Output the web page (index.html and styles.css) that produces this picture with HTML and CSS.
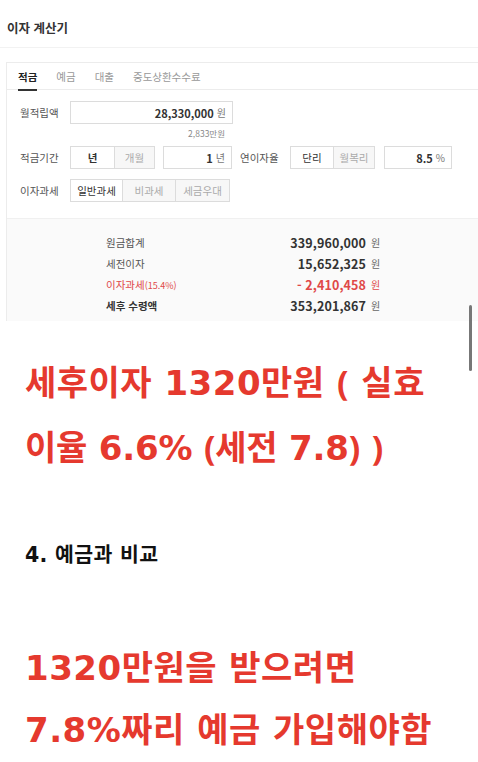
FILE: index.html
```html
<!DOCTYPE html>
<html lang="ko">
<head>
<meta charset="utf-8">
<link rel="stylesheet" href="styles.css">
</head>
<body>
<div class="page">
  <div class="header">이자 계산기</div>
  <div class="card">
    <div class="tabs">
      <span class="tab active">적금</span>
      <span class="tab">예금</span>
      <span class="tab">대출</span>
      <span class="tab">중도상환수수료</span>
    </div>
    <div class="form">
      <div class="row">
        <span class="label">월적립액</span>
        <div class="input wide"><b>28,330,000</b><span class="unit">원</span></div>
      </div>
      <div class="note">2,833만원</div>
      <div class="row">
        <span class="label">적금기간</span>
        <div class="seg">
          <span class="btn on w45"><b>년</b></span>
          <span class="btn off w40">개월</span>
        </div>
        <div class="input small"><b>1</b><span class="unit">년</span></div>
        <span class="label label2">연이자율</span>
        <div class="seg">
          <span class="btn on w44">단리</span>
          <span class="btn off w41">월복리</span>
        </div>
        <div class="input small rate"><b>8.5</b><span class="unit">%</span></div>
      </div>
      <div class="row">
        <span class="label">이자과세</span>
        <div class="seg">
          <span class="btn on w53">일반과세</span>
          <span class="btn off w53">비과세</span>
          <span class="btn off w54">세금우대</span>
        </div>
      </div>
    </div>
    <div class="results">
      <div class="res-row"><span class="rl">원금합계</span><span class="rv">339,960,000</span><span class="ru">원</span></div>
      <div class="res-row"><span class="rl">세전이자</span><span class="rv">15,652,325</span><span class="ru">원</span></div>
      <div class="res-row red"><span class="rl">이자과세<small>(15.4%)</small></span><span class="rv">- 2,410,458</span><span class="ru">원</span></div>
      <div class="res-row"><span class="rl strong">세후 수령액</span><span class="rv">353,201,867</span><span class="ru">원</span></div>
    </div>
  </div>
  <div class="content">
    <p class="big first">세후이자 1320만원 <span class="pn">(</span> 실효<br><span class="tight">이율 6.6% <span class="pn">(</span>세전 7.8<span class="pn">)</span> <span class="pn">)</span></span></p>
    <p class="sub">4. 예금과 비교</p>
    <p class="big second">1320만원을 받으려면<br>7.8%짜리 예금 가입해야함</p>
  </div>
  <div class="scrollbar"></div>
</div>
</body>
</html>
```
FILE: styles.css
```css
* { box-sizing: border-box; }
html, body { margin: 0; padding: 0; background: #fff; }
body {
  font-family: "Noto Sans CJK KR", "Noto Sans", sans-serif;
  color: #333;
  width: 478px;
  height: 762px;
  overflow: hidden;
}
.page { position: relative; width: 478px; height: 762px; }
.header {
  height: 48px;
  padding: 19px 0 0 7px;
  font-size: 12.5px;
  line-height: 18px;
  font-weight: 700;
  color: #333;
  border-bottom: 1px solid #f2f2f2;
}
.card {
  margin: 14px 0 0 6px;
  border-top: 1px solid #ececec;
  border-left: 1px solid #ececec;
}
.tabs {
  display: flex;
  height: 27px;
  border-bottom: 1px solid #ececec;
  padding-left: 11px;
}
.tab {
  font-size: 10.5px;
  line-height: 27px;
  color: #999;
  margin-right: 19px;
  position: relative;
}
.tab.active { color: #222; font-weight: 700; }
.tab.active::after {
  content: "";
  position: absolute;
  left: 0; right: 0; bottom: -2px;
  height: 2px;
  background: #333;
}
.form { padding: 11px 0 16px 13px; }
.row { display: flex; align-items: center; height: 23px; }
.row + .row { margin-top: 10px; }
.label { font-size: 10.5px; color: #555; width: 50px; flex: none; }
.label2 { width: 50px; margin-left: 8px; }
.input {
  height: 23px;
  border: 1px solid #dcdcdc;
  display: flex;
  align-items: center;
  justify-content: flex-end;
  padding-right: 6px;
  font-size: 11px;
  color: #333;
  background: #fff;
}
.input b { font-weight: 700; }
.input .unit { font-size: 10px; color: #777; margin-left: 3px; }
.input.wide { width: 163px; }
.input.small { width: 69px; margin-left: 8px; }
.input.rate { margin-left: 9px; width: 68px; }
.note {
  width: 212px;
  text-align: right;
  font-size: 8.5px;
  color: #888;
  line-height: 12px;
  margin: 3px 0 0 0;
  padding-right: 7px;
}
.note + .row { margin-top: 7px; }
.seg { display: flex; }
.btn {
  height: 23px;
  border: 1px solid #dcdcdc;
  font-size: 10.5px;
  display: flex;
  align-items: center;
  justify-content: center;
}
.btn + .btn { border-left: none; }
.btn.on { background: #fff; color: #333; }
.btn.off { background: #f7f7f7; color: #aaa; }
.w40 { width: 40px; } .w41 { width: 41px; } .w44 { width: 44px; } .w45 { width: 45px; }
.w53 { width: 53px; } .w54 { width: 54px; }
.results {
  background: #fafafa;
  border-top: 1px solid #f0f0f0;
  height: 103px;
  padding: 13px 0 0 99px;
}
.res-row {
  display: flex;
  align-items: center;
  width: 273px;
  height: 21px;
}
.rl { font-size: 10.5px; color: #555; flex: 1; }
.rl small { font-size: 9px; }
.rl.strong { font-weight: 700; color: #333; }
.rv { font-size: 12.5px; font-weight: 700; color: #333; letter-spacing: 0.1px; }
.ru { font-size: 10px; color: #666; margin-left: 5px; width: 8px; }
.res-row.red .rl, .res-row.red .rv, .res-row.red .ru { color: #e04848; }
.content { padding-left: 25px; }
.big {
  margin: 0;
  font-family: "DejaVu Sans", "Noto Sans CJK KR", sans-serif;
  font-size: 34px;
  font-weight: 700;
  color: #e5392e;
  line-height: 64px;
  letter-spacing: 0.5px;
  white-space: nowrap;
}
.pn { font-family: "Noto Sans", sans-serif; }
.tight { letter-spacing: -0.2px; }
.big.first { margin-top: 29px; }
.sub {
  margin: 61px 0 0 0;
  font-family: "DejaVu Sans", "Noto Sans CJK KR", sans-serif;
  font-size: 20.5px;
  line-height: 28px;
  font-weight: 700;
  color: #111;
  letter-spacing: 0.3px;
}
.big.second { margin-top: 68px; line-height: 62px; }
.scrollbar {
  position: absolute;
  left: 469px;
  top: 305px;
  width: 3px;
  height: 66px;
  border-radius: 2px;
  background: #777;
}
```
